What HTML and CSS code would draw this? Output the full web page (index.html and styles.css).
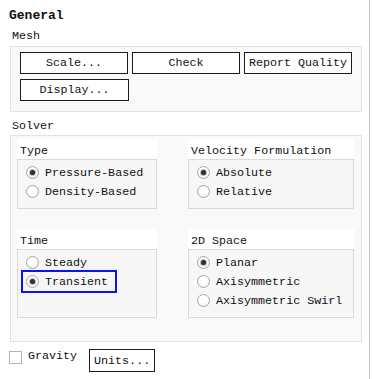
FILE: index.html
```html
<!DOCTYPE html>
<html>
	<head>
		<meta charset="UTF-8">
		<title>General</title>
		<link rel="stylesheet" href="styles.css">
	</head>
	<body>
		<div class="page">
			<div class="title">General</div>

			<div class="group-label">Mesh</div>
			<div class="panel mesh">
				<div class="btn-row">
					<div class="btn btn-wide">Scale...</div>
					<div class="btn btn-wide">Check</div>
					<div class="btn btn-wide">Report Quality</div>
				</div>
				<div class="btn-row">
					<div class="btn btn-wide">Display...</div>
				</div>
			</div>

			<div class="group-label">Solver</div>
			<div class="panel solver">
				<div class="sub">
					<div class="sub-head">Type</div>
					<div class="sub-box">
						<div class="opt"><span class="radio on"></span>Pressure-Based</div>
						<div class="opt"><span class="radio"></span>Density-Based</div>
					</div>
				</div>
				<div class="sub">
					<div class="sub-head">Velocity Formulation</div>
					<div class="sub-box">
						<div class="opt"><span class="radio on"></span>Absolute</div>
						<div class="opt"><span class="radio"></span>Relative</div>
					</div>
				</div>
				<div class="sub">
					<div class="sub-head">Time</div>
					<div class="sub-box">
						<div class="opt"><span class="radio"></span>Steady</div>
						<div class="opt focus"><span class="radio on"></span>Transient</div>
					</div>
				</div>
				<div class="sub">
					<div class="sub-head">2D Space</div>
					<div class="sub-box">
						<div class="opt"><span class="radio on"></span>Planar</div>
						<div class="opt"><span class="radio"></span>Axisymmetric</div>
						<div class="opt"><span class="radio"></span>Axisymmetric Swirl</div>
					</div>
				</div>
			</div>

			<div class="bottom">
				<span class="check"></span>
				<span class="check-text">Gravity</span>
				<div class="btn btn-units">Units...</div>
			</div>
		</div>
	</body>
</html>
```

FILE: styles.css
```css
html, body { margin: 0; padding: 0; background: #fff; overflow: hidden; }
body { font-family: "Liberation Mono", "DejaVu Sans Mono", monospace; font-size: 11.7px; color: #111; line-height: 16px; }

.page { width: 359px; height: 379px; padding-left: 10px; border-right: 1px solid #c4c4c4; }

.title { font-size: 13px; font-weight: bold; padding-top: 8px; margin-left: -1px; line-height: 16px; }
.group-label { padding-left: 2px; margin-top: 4px; margin-bottom: 2px; }
.mesh + .group-label { margin-top: 6px; margin-bottom: 1px; }

.panel { width: 352px; box-sizing: border-box; border: 1px solid #e2e2e2; background: #f9f9f9; }

.mesh { padding: 5px 9px 10px 9px; display: flex; flex-direction: column; gap: 5px; }
.btn-row { display: flex; gap: 4px; }
.btn { box-sizing: border-box; height: 22px; border: 1px solid #1c1c1c; background: #fff; display: flex; align-items: center; justify-content: center; white-space: nowrap; }
.btn-wide { width: 109px; }

.solver { padding: 3px 7px 23px 6px; display: grid; grid-template-columns: 140px 166px; column-gap: 31px; row-gap: 20px; }
.sub { display: flex; flex-direction: column; }
.sub-head { background: #fff; height: 20px; box-sizing: border-box; padding: 4px 0 0 3px; white-space: nowrap; }
.sub-box { flex: 1; border: 1px solid #dadada; background: #f7f7f7; padding: 3px 0 7px 5px; min-height: 38px; }

.opt { display: flex; align-items: center; height: 19px; padding: 0 7px 0 3px; width: max-content; white-space: nowrap; }
.opt.focus { outline: 2px solid #0a14f5; }

.radio { width: 13px; height: 13px; box-sizing: border-box; border-radius: 50%; border: 1px solid #a8a8a8; background: radial-gradient(circle at 50% 40%, #fff 40%, #eaeaea 100%); margin-right: 6px; display: flex; align-items: center; justify-content: center; }
.radio.on::after { content: ''; width: 5px; height: 5px; border-radius: 50%; background: #2e2e2e; box-shadow: 0 0 0 1px rgba(70, 70, 70, 0.35); }

.bottom { display: flex; align-items: flex-start; margin-top: 6px; margin-left: -1px; }
.check { width: 13px; height: 13px; box-sizing: border-box; border: 1px solid #b4b4b4; background: #fff; margin-top: 3px; margin-right: 6px; }
.check-text { margin-right: 12px; }
.btn-units { width: 66px; height: 23px; margin-top: 1px; }
```
